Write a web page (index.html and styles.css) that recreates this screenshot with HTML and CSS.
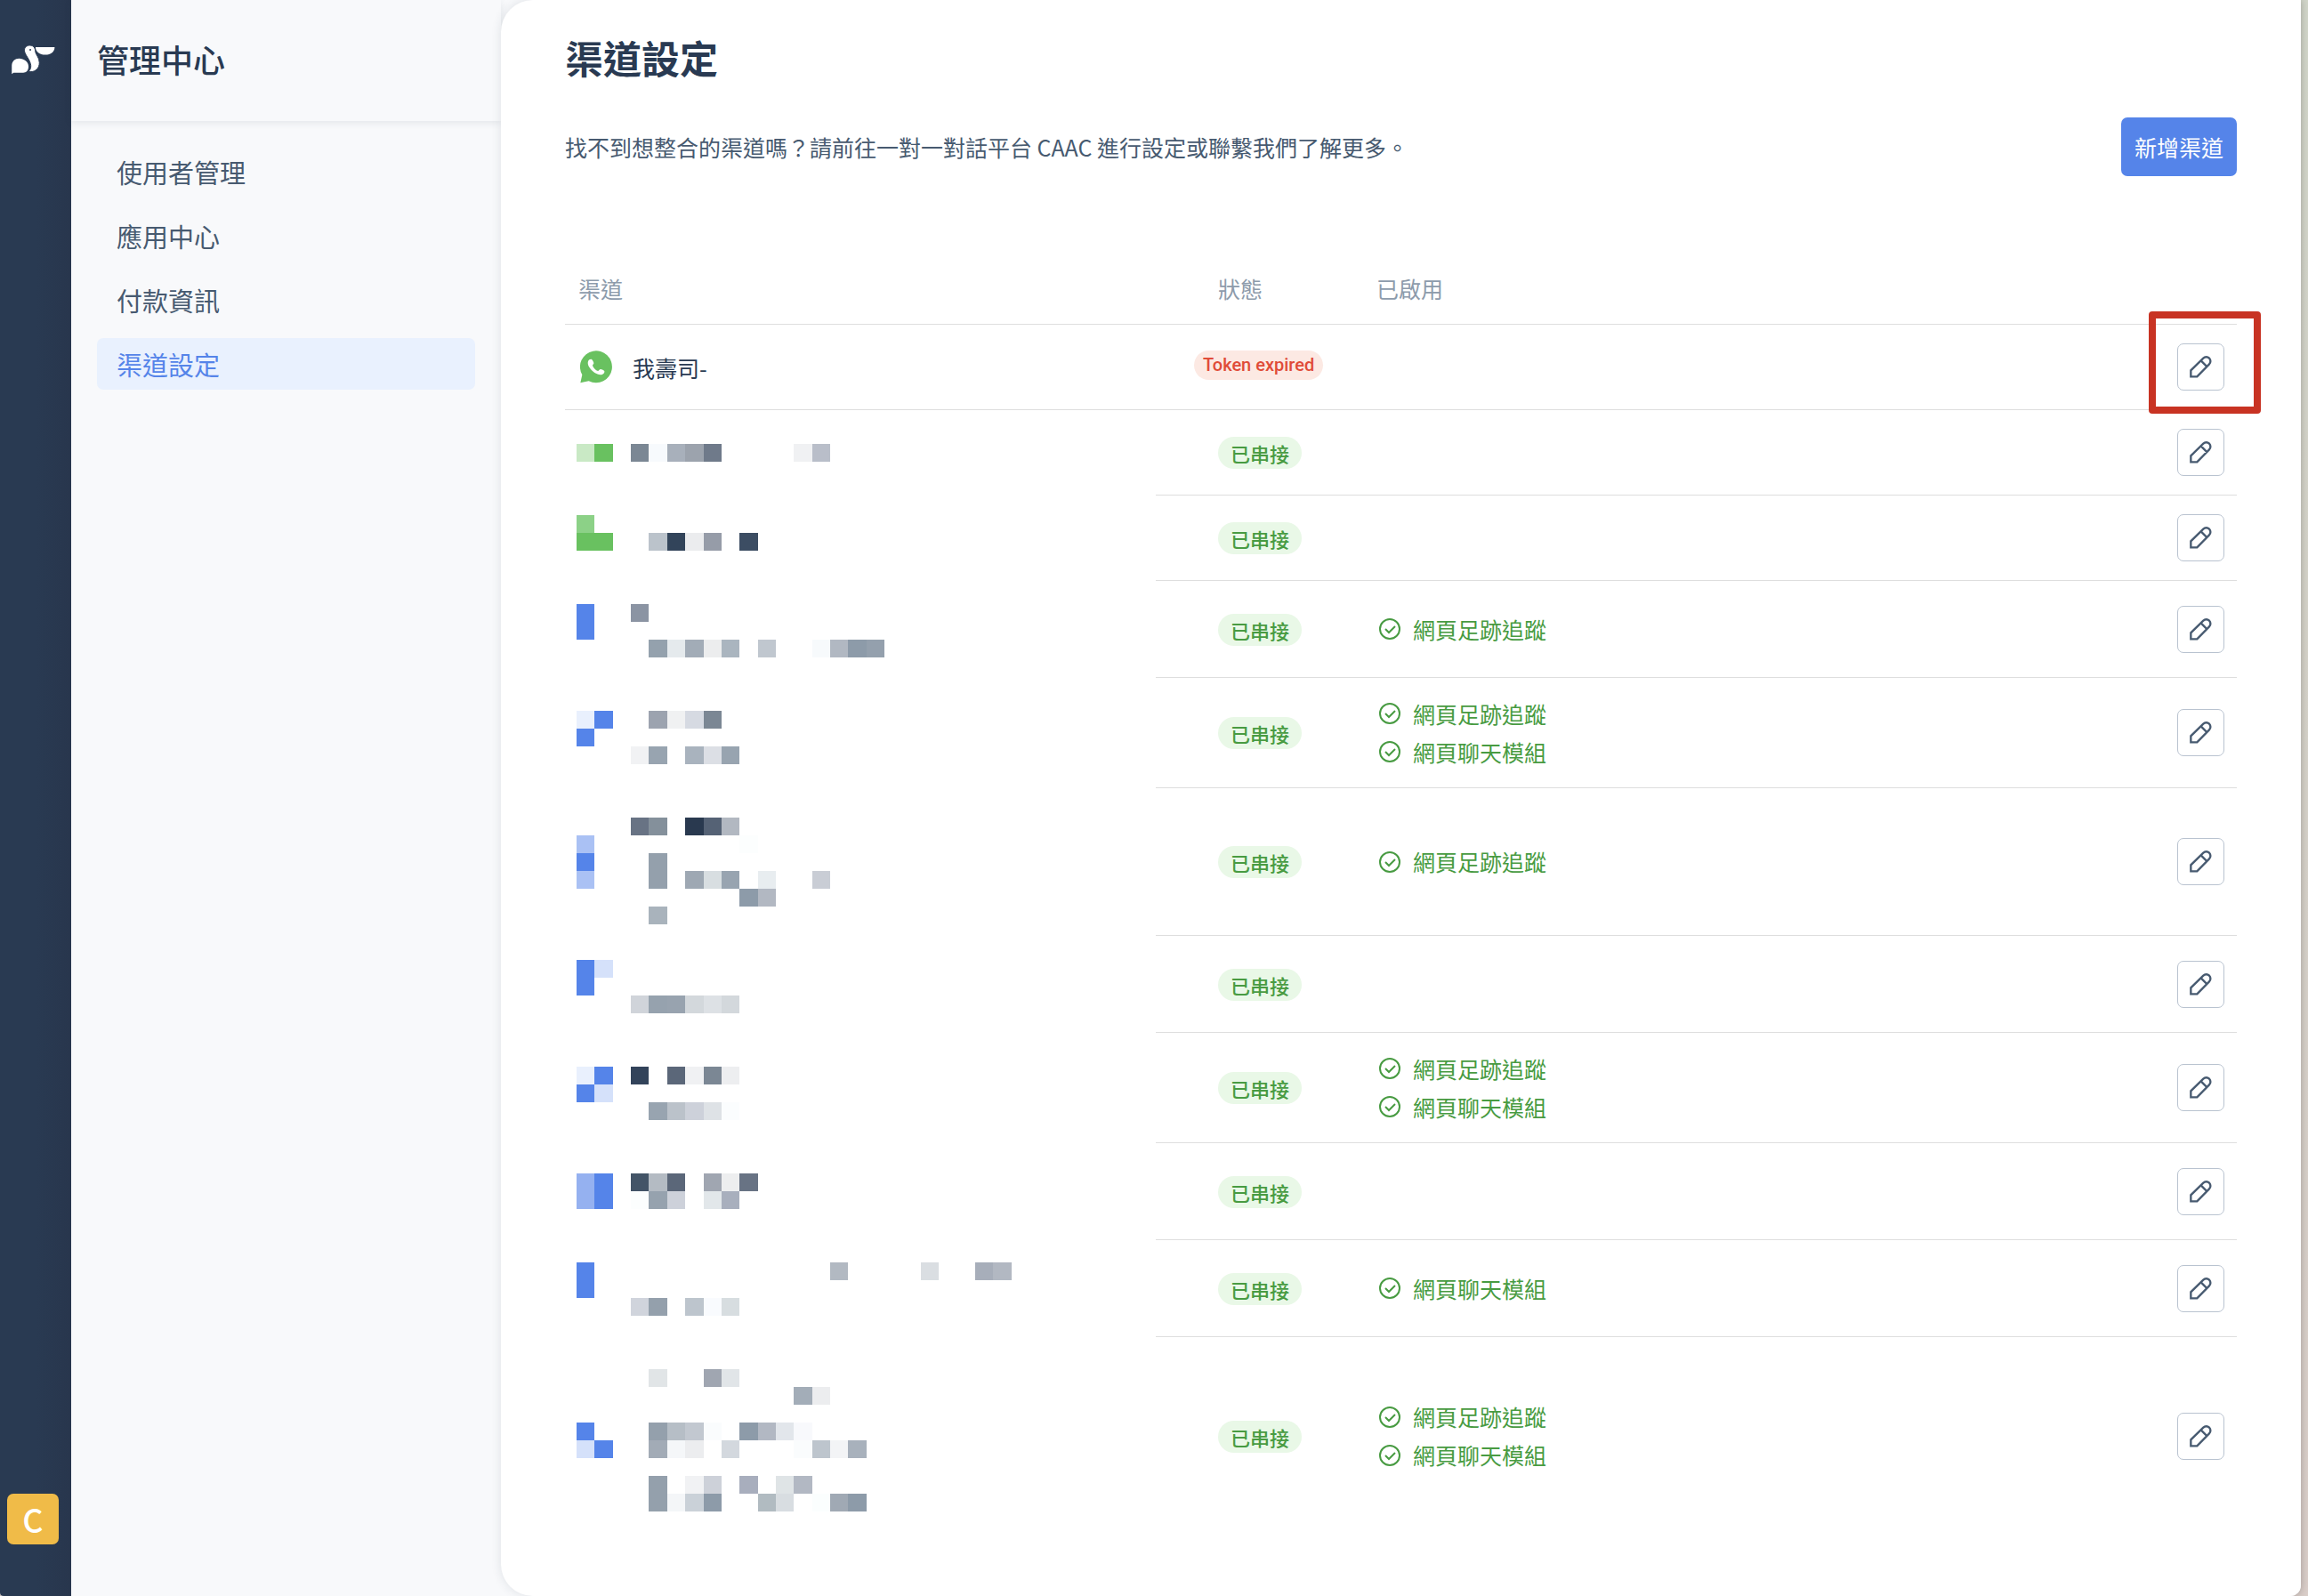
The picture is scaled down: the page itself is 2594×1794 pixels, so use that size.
FILE: index.html
```html
<!DOCTYPE html>
<html lang="zh-Hant">
<head>
    <meta charset="UTF-8">
    <meta name="viewport" content="width=device-width, initial-scale=1.0">
    <title>渠道設定</title>
    <link rel="stylesheet" href="styles.css">
</head>
<body>
    <!-- shared icons -->
    <svg class="sprite" aria-hidden="true">
        <symbol id="icon-edit" viewBox="0 0 75 75">
            <path d="M4 70V49L46 8a14 14 0 0 1 20 20L25 70ZM38 16L59 37" fill="none" stroke="currentColor" stroke-width="7"/>
        </symbol>
        <symbol id="icon-check" viewBox="0 0 30 30">
            <circle cx="15" cy="15" r="11" fill="none" stroke="currentColor" stroke-width="2"/>
            <path d="M10 15l4 4 7-7" fill="none" stroke="currentColor" stroke-width="2"/>
        </symbol>
    </svg>

    <div class="app">
        <div class="rail">
            <svg class="logo" viewBox="24 34 150 100">
                <path fill="#fff" d="M27 132V102C28 88 38 79 52 79C68 79 84 90 84 106C84 120 76 127 66 127H33Z"/>
                <path fill="#fff" stroke="#293a52" stroke-width="3" d="M70 50C70 40 79 34 89 34C101 34 107 44 107 53C107 65 121 74 121 93C121 111 109 124 90 124C84 124 86 120 89 117C96 104 90 90 80 74C74 64 70 58 70 50Z"/>
                <path fill="#fff" d="M108 40H173C173 56 160 66 141 66C122 66 108 56 108 40Z"/>
                <circle cx="90" cy="49" r="3" fill="#293a52"/>
            </svg>
            <button class="avatar">C</button>
        </div>

        <div class="sidebar">
            <h2 class="sidebar-title">管理中心</h2>
            <nav class="menu">
                <a class="menu-item" href="#">使用者管理</a>
                <a class="menu-item" href="#">應用中心</a>
                <a class="menu-item" href="#">付款資訊</a>
                <a class="menu-item active" href="#">渠道設定</a>
            </nav>
        </div>

        <main class="main">
            <h1>渠道設定</h1>
            <div class="intro">
                <p>找不到想整合的渠道嗎？請前往一對一對話平台 CAAC 進行設定或聯繫我們了解更多。</p>
                <button class="add-button">新增渠道</button>
            </div>

            <table class="channels">
                <thead>
                    <tr>
                        <th class="col-name">渠道</th>
                        <th class="col-status">狀態</th>
                        <th>已啟用</th>
                        <th class="col-action"></th>
                    </tr>
                </thead>
                <tbody>
                    <tr class="row-small">
                        <td>
                            <div class="channel">
                                <svg class="whatsapp" viewBox="37 27 111 111">
                                    <path fill="#69c160" d="M38 136L44 109A54 54 0 1 1 66 130Z"/>
                                    <path fill="#fff" d="M68 58C61 64 62 75 69 85C79 99 92 108 106 109C114 109 120 103 119 97C118 94 108 89 105 90C102 91 100 96 97 96C90 94 82 86 79 78C79 75 83 73 83 70C83 67 79 59 76 57C74 56 71 56 68 58Z"/>
                                </svg>
                                <span>我壽司-</span>
                            </div>
                        </td>
                        <td class="col-status"><span class="badge badge-expired">Token expired</span></td>
                        <td></td>
                        <td class="col-action">
                            <div class="highlight"></div>
                            <button class="edit" aria-label="編輯"><svg><use href="#icon-edit"/></svg></button>
                        </td>
                    </tr>
                    <tr class="row-small">
                        <td class="masked" rowspan="10">
                            <!-- masked channel names, one unit per block -->
                            <svg class="mosaic" viewBox="0 0 28 60" preserveAspectRatio="none">
                                <rect x="0" y="0" fill="#c9e9c5"/><rect x="1" y="0" fill="#69c160"/>
                                <rect x="3" y="0" fill="#7b8794"/><rect x="4" y="0" fill="#f7fafd"/><rect x="5" y="0" fill="#a8b0bb"/><rect x="6" y="0" fill="#9ca3ad"/><rect x="7" y="0" fill="#6f7a8a"/>
                                <rect x="12" y="0" fill="#f0f1f3"/><rect x="13" y="0" fill="#b9bec9"/>

                                <rect x="0" y="4" fill="#8cd187"/><rect x="0" y="5" fill="#69c160"/><rect x="1" y="5" fill="#69c160"/>
                                <rect x="4" y="5" fill="#bbc3cb"/><rect x="5" y="5" fill="#32445a"/><rect x="6" y="5" fill="#ebecee"/><rect x="7" y="5" fill="#969ca8"/><rect x="9" y="5" fill="#3c4d63"/>

                                <rect x="0" y="9" fill="#5584e9"/><rect x="0" y="10" fill="#5584e9"/><rect x="3" y="9" fill="#8b94a3"/>
                                <rect x="4" y="11" fill="#94a1ad"/><rect x="5" y="11" fill="#e5eaed"/><rect x="6" y="11" fill="#a2acb7"/><rect x="7" y="11" fill="#ecedee"/><rect x="8" y="11" fill="#aab5bf"/>
                                <rect x="10" y="11" fill="#c0c7cf"/><rect x="13" y="11" fill="#f7fafc"/><rect x="14" y="11" fill="#b1b8c2"/><rect x="15" y="11" fill="#8d9ba9"/><rect x="16" y="11" fill="#94a0ad"/>

                                <rect x="0" y="15" fill="#e9f0fd"/><rect x="1" y="15" fill="#5584e9"/><rect x="0" y="16" fill="#5584e9"/>
                                <rect x="4" y="15" fill="#9ca3af"/><rect x="5" y="15" fill="#f0f1f2"/><rect x="6" y="15" fill="#d6dae2"/><rect x="7" y="15" fill="#7b8794"/>
                                <rect x="3" y="17" fill="#f1f2f4"/><rect x="4" y="17" fill="#98a4b0"/><rect x="6" y="17" fill="#a9b3be"/><rect x="7" y="17" fill="#dcdfe5"/><rect x="8" y="17" fill="#98a4b0"/>

                                <rect x="3" y="21" fill="#687384"/><rect x="4" y="21" fill="#84909b"/><rect x="6" y="21" fill="#29394f"/><rect x="7" y="21" fill="#556275"/><rect x="8" y="21" fill="#b2b8c1"/>
                                <rect x="0" y="22" fill="#aac1f4"/><rect x="9" y="22" fill="#fcfefe"/>
                                <rect x="0" y="23" fill="#5584e9"/><rect x="4" y="23" fill="#94a0ac"/>
                                <rect x="0" y="24" fill="#aac1f4"/><rect x="4" y="24" fill="#94a0ac"/><rect x="6" y="24" fill="#9ea8b3"/><rect x="7" y="24" fill="#d8dee1"/><rect x="8" y="24" fill="#98a4b0"/><rect x="10" y="24" fill="#e8edf0"/><rect x="13" y="24" fill="#c9cdd5"/>
                                <rect x="9" y="25" fill="#8d9ba9"/><rect x="10" y="25" fill="#b2b8c2"/><rect x="4" y="26" fill="#a9b3bc"/>

                                <rect x="0" y="29" fill="#5584e9"/><rect x="1" y="29" fill="#d5e1fa"/><rect x="0" y="30" fill="#5584e9"/>
                                <rect x="3" y="31" fill="#d0d4da"/><rect x="4" y="31" fill="#96a2ae"/><rect x="5" y="31" fill="#98a3af"/><rect x="6" y="31" fill="#d3d8dc"/><rect x="7" y="31" fill="#dde1e5"/><rect x="8" y="31" fill="#d3d8dc"/>

                                <rect x="0" y="35" fill="#e9f0fd"/><rect x="1" y="35" fill="#5584e9"/><rect x="0" y="36" fill="#5584e9"/><rect x="1" y="36" fill="#d5e1fa"/>
                                <rect x="3" y="35" fill="#32435a"/><rect x="5" y="35" fill="#5b6779"/><rect x="6" y="35" fill="#f0f1f3"/><rect x="7" y="35" fill="#7b8794"/><rect x="8" y="35" fill="#edeef0"/>
                                <rect x="4" y="37" fill="#98a4b0"/><rect x="5" y="37" fill="#bbc2ca"/><rect x="6" y="37" fill="#cdd1da"/><rect x="7" y="37" fill="#dee2e6"/><rect x="8" y="37" fill="#fbfdfe"/>

                                <rect x="0" y="41" fill="#95b1f0"/><rect x="1" y="41" fill="#5584e9"/><rect x="0" y="42" fill="#95b1f0"/><rect x="1" y="42" fill="#5584e9"/>
                                <rect x="3" y="41" fill="#435467"/><rect x="4" y="41" fill="#b4bbc3"/><rect x="5" y="41" fill="#5b6779"/><rect x="7" y="41" fill="#a0a6b1"/><rect x="8" y="41" fill="#edeeef"/><rect x="9" y="41" fill="#687384"/>
                                <rect x="3" y="42" fill="#fcfefe"/><rect x="4" y="42" fill="#96a2ae"/><rect x="5" y="42" fill="#cdd1da"/><rect x="7" y="42" fill="#e2e7ea"/><rect x="8" y="42" fill="#a8afbd"/>

                                <rect x="0" y="46" fill="#5584e9"/><rect x="0" y="47" fill="#5584e9"/>
                                <rect x="14" y="46" fill="#b2b9c2"/><rect x="19" y="46" fill="#dadee2"/><rect x="22" y="46" fill="#a7aeba"/><rect x="23" y="46" fill="#b2b8c2"/>
                                <rect x="3" y="48" fill="#d0d4dc"/><rect x="4" y="48" fill="#94a0ac"/><rect x="6" y="48" fill="#bdc5cd"/><rect x="7" y="48" fill="#f9fbfe"/><rect x="8" y="48" fill="#d7dde0"/>

                                <rect x="4" y="52" fill="#e1e5e7"/><rect x="7" y="52" fill="#a0a6b1"/><rect x="8" y="52" fill="#e1e5e8"/>
                                <rect x="12" y="53" fill="#a3adb8"/><rect x="13" y="53" fill="#ecedef"/>
                                <rect x="0" y="55" fill="#5584e9"/><rect x="0" y="56" fill="#d5e1fa"/><rect x="1" y="56" fill="#5584e9"/>
                                <rect x="4" y="55" fill="#94a0ac"/><rect x="5" y="55" fill="#b6bec6"/><rect x="6" y="55" fill="#c2c8d0"/><rect x="7" y="55" fill="#fafcfd"/>
                                <rect x="9" y="55" fill="#8d9ba9"/><rect x="10" y="55" fill="#b2b8c3"/><rect x="11" y="55" fill="#e2e6eb"/><rect x="12" y="55" fill="#f8f9fc"/>
                                <rect x="4" y="56" fill="#a2abb6"/><rect x="5" y="56" fill="#f5f7f9"/><rect x="6" y="56" fill="#ecedef"/><rect x="8" y="56" fill="#d3d8de"/>
                                <rect x="12" y="56" fill="#fafcfd"/><rect x="13" y="56" fill="#bdc5cd"/><rect x="14" y="56" fill="#f3f4f6"/><rect x="15" y="56" fill="#a8b1bc"/>
                                <rect x="4" y="58" fill="#94a0ac"/><rect x="6" y="58" fill="#f1f2f4"/><rect x="7" y="58" fill="#cdd1d9"/><rect x="9" y="58" fill="#a8aebd"/><rect x="11" y="58" fill="#dfe4e6"/><rect x="12" y="58" fill="#b2b8c3"/>
                                <rect x="4" y="59" fill="#94a0ac"/><rect x="5" y="59" fill="#f4f6f8"/><rect x="6" y="59" fill="#cad1d8"/><rect x="7" y="59" fill="#8d9ba9"/><rect x="10" y="59" fill="#b1bbc1"/><rect x="11" y="59" fill="#d8dde1"/>
                                <rect x="13" y="59" fill="#fbfefe"/><rect x="14" y="59" fill="#a0a9b4"/><rect x="15" y="59" fill="#8d9ba9"/>
                            </svg>
                        </td>
                        <td class="col-status"><span class="badge">已串接</span></td>
                        <td></td>
                        <td class="col-action"><button class="edit" aria-label="編輯"><svg><use href="#icon-edit"/></svg></button></td>
                    </tr>
                    <tr class="row-small">
                        <td class="col-status"><span class="badge">已串接</span></td>
                        <td></td>
                        <td class="col-action"><button class="edit" aria-label="編輯"><svg><use href="#icon-edit"/></svg></button></td>
                    </tr>
                    <tr class="row-medium">
                        <td class="col-status"><span class="badge">已串接</span></td>
                        <td>
                            <div class="feature"><svg><use href="#icon-check"/></svg>網頁足跡追蹤</div>
                        </td>
                        <td class="col-action"><button class="edit" aria-label="編輯"><svg><use href="#icon-edit"/></svg></button></td>
                    </tr>
                    <tr class="row-large">
                        <td class="col-status"><span class="badge">已串接</span></td>
                        <td>
                            <div class="feature"><svg><use href="#icon-check"/></svg>網頁足跡追蹤</div>
                            <div class="feature"><svg><use href="#icon-check"/></svg>網頁聊天模組</div>
                        </td>
                        <td class="col-action"><button class="edit" aria-label="編輯"><svg><use href="#icon-edit"/></svg></button></td>
                    </tr>
                    <tr class="row-xlarge">
                        <td class="col-status"><span class="badge">已串接</span></td>
                        <td>
                            <div class="feature"><svg><use href="#icon-check"/></svg>網頁足跡追蹤</div>
                        </td>
                        <td class="col-action"><button class="edit" aria-label="編輯"><svg><use href="#icon-edit"/></svg></button></td>
                    </tr>
                    <tr class="row-medium">
                        <td class="col-status"><span class="badge">已串接</span></td>
                        <td></td>
                        <td class="col-action"><button class="edit" aria-label="編輯"><svg><use href="#icon-edit"/></svg></button></td>
                    </tr>
                    <tr class="row-large">
                        <td class="col-status"><span class="badge">已串接</span></td>
                        <td>
                            <div class="feature"><svg><use href="#icon-check"/></svg>網頁足跡追蹤</div>
                            <div class="feature"><svg><use href="#icon-check"/></svg>網頁聊天模組</div>
                        </td>
                        <td class="col-action"><button class="edit" aria-label="編輯"><svg><use href="#icon-edit"/></svg></button></td>
                    </tr>
                    <tr class="row-medium">
                        <td class="col-status"><span class="badge">已串接</span></td>
                        <td></td>
                        <td class="col-action"><button class="edit" aria-label="編輯"><svg><use href="#icon-edit"/></svg></button></td>
                    </tr>
                    <tr class="row-medium">
                        <td class="col-status"><span class="badge">已串接</span></td>
                        <td>
                            <div class="feature"><svg><use href="#icon-check"/></svg>網頁聊天模組</div>
                        </td>
                        <td class="col-action"><button class="edit" aria-label="編輯"><svg><use href="#icon-edit"/></svg></button></td>
                    </tr>
                    <tr class="row-last">
                        <td class="col-status"><span class="badge">已串接</span></td>
                        <td>
                            <div class="feature"><svg><use href="#icon-check"/></svg>網頁足跡追蹤</div>
                            <div class="feature"><svg><use href="#icon-check"/></svg>網頁聊天模組</div>
                        </td>
                        <td class="col-action"><button class="edit" aria-label="編輯"><svg><use href="#icon-edit"/></svg></button></td>
                    </tr>
                </tbody>
            </table>
        </main>
    </div>
</body>
</html>
```

FILE: styles.css
```css
* {
    margin: 0;
    padding: 0;
    box-sizing: border-box;
}

body {
    font-family: 'Noto Sans CJK TC', sans-serif;
    font-size: 25px;
    color: #293a52;
    background: linear-gradient(#d1d5c9, #d9cdc8);
    min-height: 100vh;
    padding-right: 8px;
}

button {
    font-family: inherit;
    border: none;
    cursor: pointer;
}

.sprite {
    display: none;
}

.app {
    display: flex;
    min-height: 100vh;
    background-color: #f8f9fb;
    border-radius: 0 0 12px 4px;
    overflow: hidden;
    box-shadow: 0 0 8px rgba(0, 0, 0, 0.25);
}

/* left rail */
.rail {
    display: flex;
    flex-direction: column;
    justify-content: space-between;
    width: 80px;
    padding: 51px 8px 58px;
    background: linear-gradient(to right, #293a52 50%, #28364d);
}

.logo {
    width: 50px;
    height: 33px;
    margin-left: 4px;
}

.avatar {
    width: 58px;
    height: 57px;
    border-radius: 7px;
    background-color: #f0bb48;
    color: #fff;
    font-size: 36px;
    font-weight: 500;
    line-height: 57px;
}

/* sidebar */
.sidebar {
    width: 483px;
}

.sidebar-title {
    height: 136px;
    padding-left: 29px;
    font-size: 36px;
    font-weight: 500;
    line-height: 133px;
    box-shadow: 0 2px 8px rgba(40, 54, 77, 0.1);
}

.menu {
    display: flex;
    flex-direction: column;
    gap: 14px;
    padding: 28px 29px;
}

.menu-item {
    padding: 0 22px;
    border-radius: 7px;
    color: #475a70;
    font-size: 29px;
    line-height: 58px;
    text-decoration: none;
}

.menu-item.active {
    background-color: #e9f1fe;
    color: #5584e9;
}

/* content */
.main {
    position: relative;
    flex: 1;
    padding: 32px 72px 60px;
    background-color: #fff;
    border-radius: 36px 0 0 36px;
    box-shadow: 0 0 12px rgba(40, 54, 77, 0.12);
}

h1 {
    font-size: 43px;
    font-weight: 700;
    line-height: 64px;
}

.intro {
    display: flex;
    justify-content: space-between;
    align-items: center;
    margin-top: 36px;
    color: #475a70;
}

.add-button {
    height: 66px;
    padding: 0 15px;
    border-radius: 7px;
    background-color: #5584e9;
    color: #fff;
    font-size: 25px;
}

/* channel table */
.channels {
    width: 100%;
    margin-top: 88px;
    border-spacing: 0;
    table-layout: fixed;
}

.channels th,
.channels td {
    padding: 0 15px;
    border-bottom: 1px solid #dedede;
    text-align: left;
    vertical-align: middle;
}

.channels th {
    height: 79px;
    padding-bottom: 3px;
    color: #8d9bab;
    font-weight: 400;
}

.channels .col-name {
    width: 664px;
}

.channels .col-status {
    width: 233px;
    padding-left: 70px;
}

.channels .col-action {
    position: relative;
    width: 82px;
    padding: 0 14px 0 15px;
}

.channels .masked {
    padding: 38px 13px 0;
    border-bottom: none;
    vertical-align: top;
}

.row-small {
    height: 96px;
}

.row-medium {
    height: 109px;
}

.row-large {
    height: 124px;
}

.row-xlarge {
    height: 166px;
}

.row-last {
    height: 222px;
}

.channels .row-last td {
    border-bottom: none;
}

.channel {
    display: flex;
    align-items: center;
    gap: 22px;
}

.whatsapp {
    width: 37px;
    height: 37px;
    margin-left: 2px;
}

.badge {
    display: inline-block;
    padding: 0 14px;
    border-radius: 18px;
    background-color: #e9f8e7;
    color: #489b42;
    font-size: 22px;
    font-weight: 500;
    line-height: 36px;
}

.badge-expired {
    margin: 0 0 10px -27px;
    padding: 0 10px;
    background-color: #fce9e3;
    color: #e04c38;
    font-family: Roboto, sans-serif;
    font-size: 20px;
    line-height: 33px;
}

.feature {
    display: flex;
    align-items: center;
    gap: 11px;
    color: #489b42;
    line-height: 43px;
}

.feature svg {
    width: 30px;
    height: 30px;
}

.edit {
    display: flex;
    align-items: center;
    justify-content: center;
    width: 53px;
    height: 53px;
    border: 1px solid #b9c3d0;
    border-radius: 7px;
    background-color: #fff;
    color: #475a70;
}

.edit svg {
    width: 25px;
    height: 25px;
}

/* marks the channel that has to be reconnected */
.highlight {
    position: absolute;
    top: -15px;
    left: -17px;
    width: 126px;
    height: 115px;
    border: 8px solid #c83323;
    border-radius: 4px;
    pointer-events: none;
}

.mosaic {
    display: block;
    width: 570px;
    height: 1200px;
    shape-rendering: crispEdges;
}

.mosaic rect {
    width: 1px;
    height: 1px;
}
```
